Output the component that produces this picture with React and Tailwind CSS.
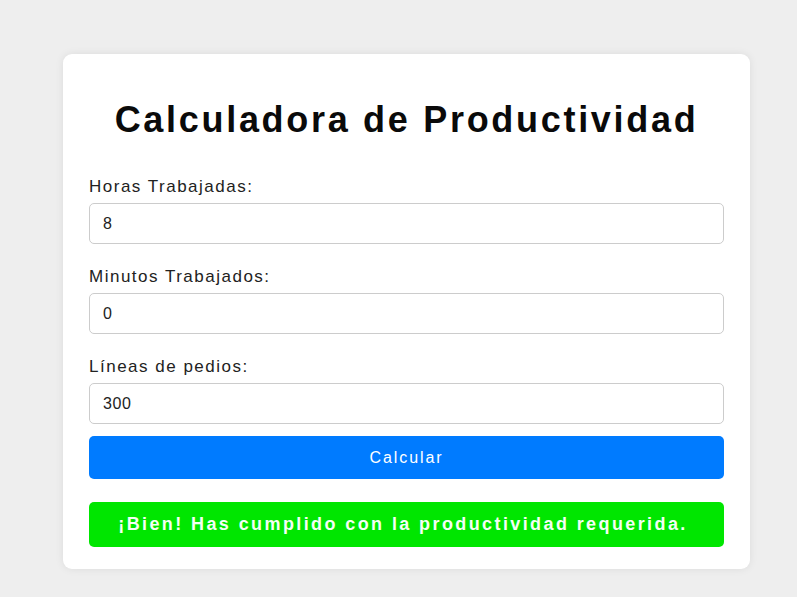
import React from "react";

function Field({ label, value, labelMt }) {
  return (
    <div className={labelMt}>
      <div className="text-[17px] leading-[20px] tracking-[1.5px] text-[#222]">{label}</div>
      <input
        type="text"
        readOnly
        value={value}
        className="mt-[6px] block w-full h-[41px] border border-[#cccccc] rounded-[5px] bg-white pl-[13px] text-[16px] tracking-[0.6px] text-[#222] font-['Liberation_Sans',Arial,sans-serif] outline-none"
      />
    </div>
  );
}

export default function App() {
  return (
    <div className="min-h-screen w-full bg-[#eeeeee] pt-[54px] pl-[63px] font-['Liberation_Sans',Arial,sans-serif]">
      <div className="w-[687px] bg-white rounded-[9px] shadow-[0_0_8px_rgba(0,0,0,0.08)] px-[26px] pt-[45px] pb-[22px]">
        <h1 className="text-center text-[36px] leading-[42px] font-bold tracking-[2.7px] text-[#0a0a0a]">
          Calculadora de Productividad
        </h1>
        <Field label="Horas Trabajadas:" value="8" labelMt="mt-[36px]" />
        <Field label="Minutos Trabajados:" value="0" labelMt="mt-[23px]" />
        <Field label="Líneas de pedios:" value="300" labelMt="mt-[23px]" />
        <button className="mt-[12px] block w-full h-[43px] rounded-[5px] bg-[#007bff] text-white text-[16px] tracking-[1.9px]">
          Calcular
        </button>
        <div className="mt-[23px] h-[45px] rounded-[5px] bg-[#00e600] flex items-center justify-center pr-[7px] text-[18px] font-bold tracking-[2.4px] text-[#f4fff4]">
          ¡Bien! Has cumplido con la productividad requerida.
        </div>
      </div>
    </div>
  );
}
